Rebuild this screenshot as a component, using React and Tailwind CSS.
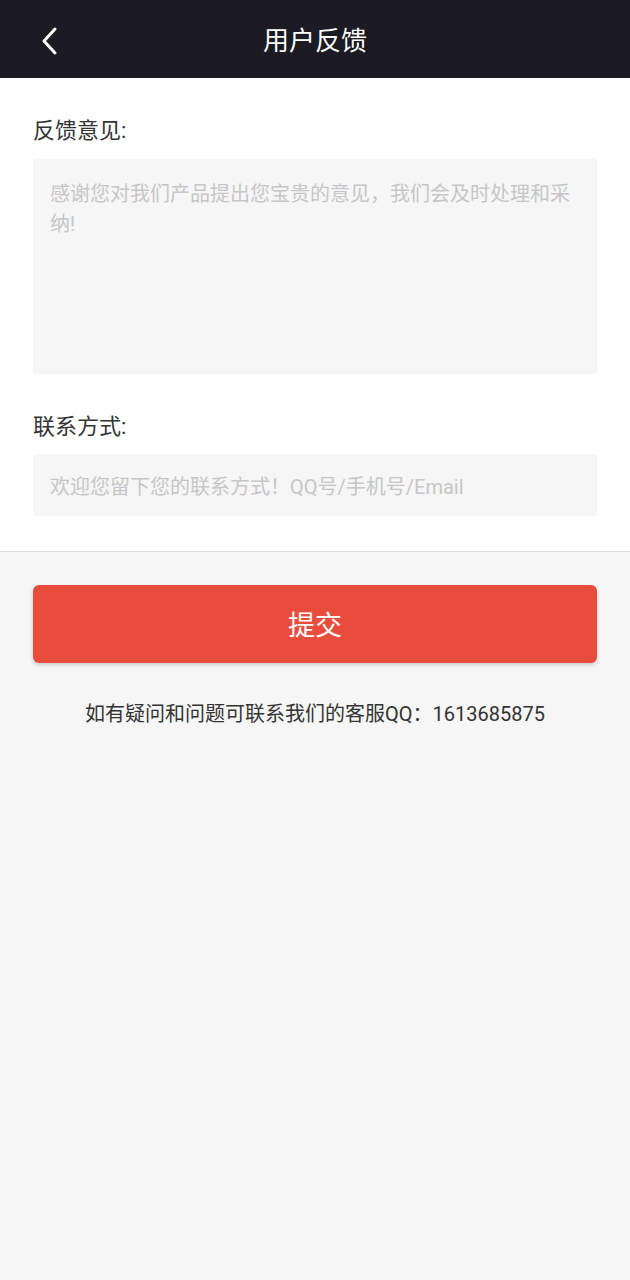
const App = () => {
  return (
    <div
      className="min-h-[1280px] w-full bg-[#f6f6f6] text-[#333]"
      style={{ fontFamily: 'Roboto, "Noto Sans CJK SC", "Noto Sans", sans-serif' }}
    >
      {/* Header */}
      <div className="relative flex h-[78px] items-center justify-center bg-[#1c1b23]">
        <button className="absolute left-[36px] top-[25px] flex h-[32px] w-[28px] items-center justify-center">
          <svg width="20" height="30" viewBox="0 0 20 30" fill="none">
            <path d="M15 3 L4 15 L15 27" stroke="#ffffff" strokeWidth="3" strokeLinecap="round" strokeLinejoin="round" />
          </svg>
        </button>
        <h1 className="pt-[4px] text-[26px] font-normal leading-none text-white">用户反馈</h1>
      </div>

      {/* Form */}
      <div className="border-b border-[#dcdcdc] bg-white px-[33px] pb-[35px] pt-[38px]">
        <div className="text-[22px] leading-[30px] text-[#333]">反馈意见:</div>
        <textarea
          className="mt-[13px] block h-[215px] w-full resize-none rounded-[3px] bg-[#f6f6f6] pl-[17px] pr-[6px] pt-[20px] text-[20px] leading-[30px] outline-none placeholder:text-[#c6c6c6]"
          placeholder="感谢您对我们产品提出您宝贵的意见，我们会及时处理和采纳!"
        />

        <div className="mt-[38px] text-[22px] leading-[30px] text-[#333]">联系方式:</div>
        <input
          className="mt-[12px] block h-[62px] w-full rounded-[3px] bg-[#f6f6f6] px-[17px] pt-[4px] text-[20px] outline-none placeholder:text-[#c6c6c6]"
          placeholder="欢迎您留下您的联系方式！QQ号/手机号/Email"
        />
      </div>

      {/* Submit */}
      <div className="px-[33px] pt-[33px]">
        <button className="flex h-[78px] w-full items-center justify-center rounded-[6px] bg-[#e84c3d] pt-[4px] text-[27px] text-white shadow-[0_2px_4px_rgba(0,0,0,0.18)]">
          提交
        </button>
        <p className="mt-[37px] text-center text-[20px] leading-[28px] text-[#333]">
          如有疑问和问题可联系我们的客服QQ：1613685875
        </p>
      </div>
    </div>
  );
};

export default App;
